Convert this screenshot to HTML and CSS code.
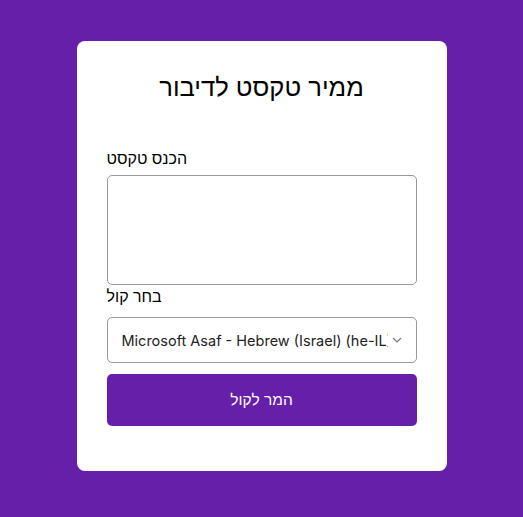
FILE: index.html
```
<!DOCTYPE html>
<html lang="he">
<head>
<meta charset="utf-8">
<title>ממיר טקסט לדיבור</title>
<link rel="stylesheet" href="styles.css">
</head>
<body>
<main class="card">
  <h1 class="title">ממיר טקסט לדיבור</h1>
  <label class="label" for="text">הכנס טקסט</label>
  <textarea id="text" class="textarea"></textarea>
  <label class="label" for="voice">בחר קול</label>
  <div class="select-wrap">
    <select id="voice" class="select">
      <option>Microsoft Asaf - Hebrew (Israel) (he-IL)</option>
    </select>
    <svg class="chevron" width="10" height="6" viewBox="0 0 10 6"><path d="M1 1l4 4 4-4" fill="none" stroke="#777" stroke-width="1.2"/></svg>
  </div>
  <button class="button" type="button">המר לקול</button>
</main>
</body>
</html>
```
FILE: styles.css
```
html, body { margin: 0; padding: 0; }
body {
  background: #661fa9;
  min-height: 517px;
  font-family: "Liberation Sans", Arial, sans-serif;
  padding-top: 41px;
  box-sizing: border-box;
}
.card {
  width: 370px;
  box-sizing: border-box;
  margin: 0 auto;
  background: #fff;
  border-radius: 8px;
  padding: 30px 30px 45px;
  display: flex;
  flex-direction: column;
}
.title {
  margin: 0 0 44px;
  font-size: 25.6px;
  line-height: 32px;
  font-weight: normal;
  text-align: center;
  color: #000;
}
.label {
  display: block;
  font-size: 16px;
  line-height: 24px;
  color: #000;
  margin-bottom: 4px;
}
.textarea {
  display: block;
  width: 100%;
  height: 110px;
  box-sizing: border-box;
  border: 1px solid #999;
  border-radius: 5px;
  resize: none;
  margin: 0;
}
.select-wrap {
  position: relative;
  margin-top: 4px;
}
.select {
  display: block;
  width: 100%;
  height: 46px;
  box-sizing: border-box;
  border: 1px solid #999;
  border-radius: 5px;
  background: #fff;
  -webkit-appearance: none;
  appearance: none;
  padding: 0 28px 0 14px;
  font-family: Inter, sans-serif;
  font-size: 14.5px;
  color: #222;
}
.chevron {
  position: absolute;
  right: 15px;
  top: 20px;
}
.button {
  margin-top: 11px;
  height: 52px;
  border: none;
  border-radius: 5px;
  background: #661fa9;
  color: #fff;
  font-family: "Liberation Sans", Arial, sans-serif;
  font-size: 15.5px;
}
```
